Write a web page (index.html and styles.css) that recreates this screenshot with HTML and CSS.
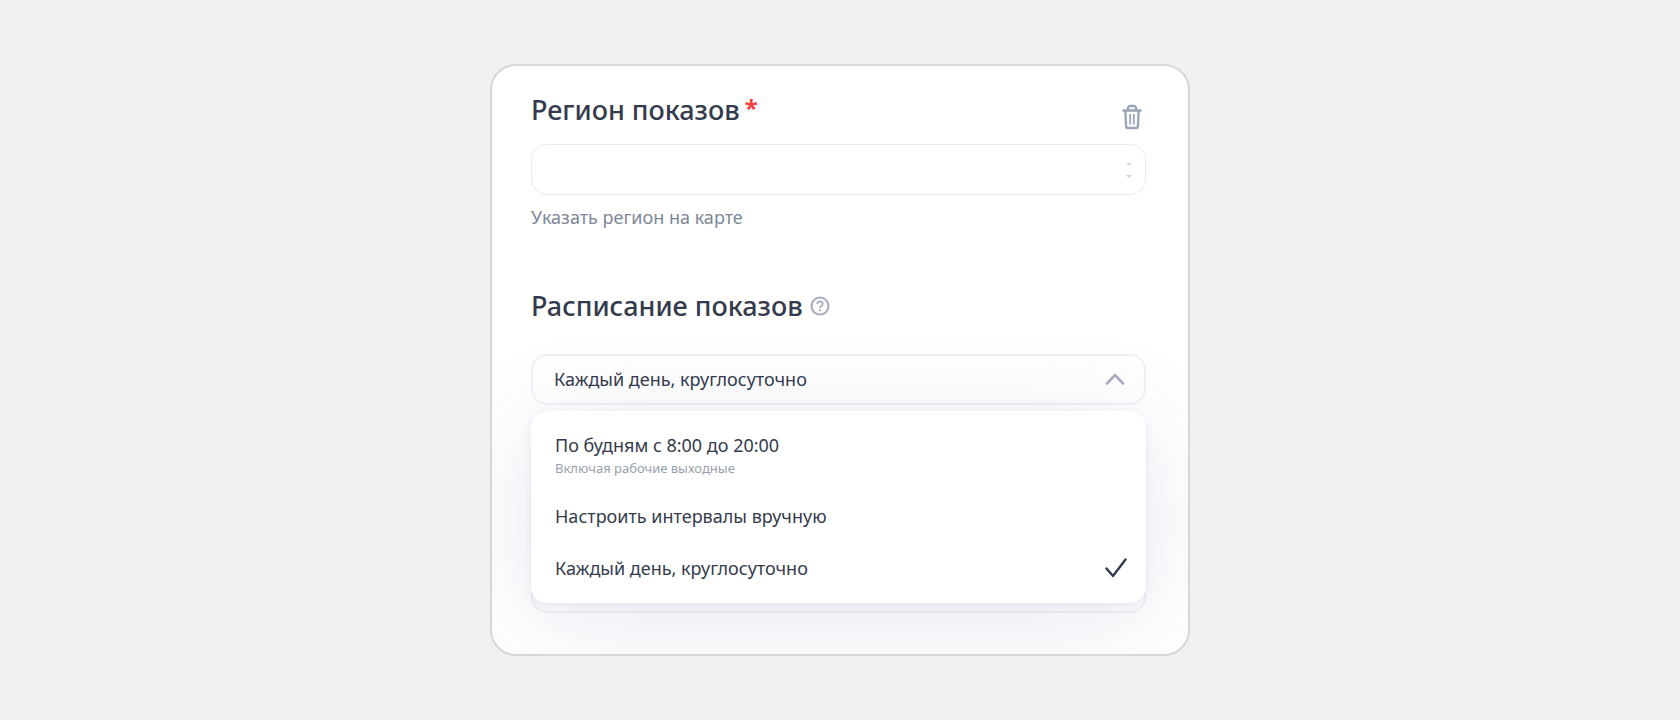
FILE: index.html
```
<!DOCTYPE html>
<html lang="ru">
<head>
    <meta charset="UTF-8">
    <title>Регион и расписание показов</title>
    <meta name="viewport" content="width=device-width, initial-scale=1.0">
    <link rel="stylesheet" href="styles.css">
</head>

<body>

<form class="card">
    <section class="group">
        <div class="group-head">
            <label class="title" for="region">Регион показов<span class="required">*</span></label>
            <button class="icon-button" type="button" aria-label="Удалить">
                <svg class="trash" viewBox="0 0 20 26" fill="none" stroke="currentColor" stroke-width="2.400">
                    <path d="M1.500 6.500h17" stroke-linecap="round"/>
                    <path d="M6 6V4.500Q6 2 8.500 2h3Q14 2 14 4.500V6"/>
                    <path d="M3.400 7l.7 15.500Q4.200 24 5.500 24h9q1.300 0 1.400-1.500L16.600 7"/>
                    <path d="M8.200 10v10.500M11.800 10v10.500" stroke-width="1.800"/>
                </svg>
            </button>
        </div>
        <div class="field">
            <input class="control" type="text" id="region">
            <svg class="spin" viewBox="0 0 6 16" fill="currentColor">
                <path d="M0 3L3 0l3 3zM0 13l3 3 3-3z"/>
            </svg>
        </div>
        <a class="map-link" href="#map">Указать регион на карте</a>
    </section>

    <section class="group">
        <div class="group-head">
            <label class="title" for="schedule">Расписание показов</label>
            <button class="help" type="button" aria-label="Справка">
                <svg viewBox="0 0 20 20" fill="none" stroke="currentColor" stroke-width="2.200">
                    <circle cx="10" cy="10" r="8.500"/>
                    <path d="M7.200 8.200Q7.200 5.400 10 5.400t2.800 2.400Q12.800 9.200 11.300 10T10 12" stroke-width="1.800"/>
                    <path d="M10 13.200v2" stroke-width="2"/>
                </svg>
            </button>
        </div>
        <div class="field schedule">
            <select class="control" id="schedule">
                <option>Каждый день, круглосуточно</option>
                <option>По будням с 8:00 до 20:00</option>
                <option>Настроить интервалы вручную</option>
            </select>
            <svg class="chevron" viewBox="0 0 20 12" fill="none" stroke="currentColor" stroke-width="2.600" stroke-linecap="round" stroke-linejoin="round">
                <path d="M2 10.500L10 2l8 8.500"/>
            </svg>
            <div class="menu">
                <button class="option" type="button">
                    <span>По будням с 8:00 до 20:00</span>
                    <small>Включая рабочие выходные</small>
                </button>
                <button class="option" type="button">Настроить интервалы вручную</button>
                <button class="option" type="button">
                    Каждый день, круглосуточно
                    <svg class="check" viewBox="0 0 22 20" fill="none" stroke="currentColor" stroke-width="2.400" stroke-linecap="round" stroke-linejoin="round">
                        <path d="M1.500 10.500L8 18 20.500 1.500"/>
                    </svg>
                </button>
            </div>
        </div>
    </section>

    <input class="control last" type="text" aria-label="Дополнительно">
</form>

</body>
</html>
```
FILE: styles.css
```
* {
    box-sizing: border-box;
}

body {
    margin: 0;
    min-height: 100vh;
    padding: 64px 20px;
    background: #f1f1f1;
    color: #343b4c;
    font-family: "Noto Sans", "Open Sans", sans-serif;
    font-size: 18px;
    line-height: 24px;
}

.card {
    max-width: 700px;
    margin: 0 auto;
    padding: 25px 42px 41px 39px;
    background: #fff;
    border: 2px solid #d6d7d9;
    border-radius: 26px;
    overflow: hidden;
}

.group {
    display: flex;
    flex-direction: column;
}

.group + .group {
    margin-top: 58px;
}

.group-head {
    display: flex;
    align-items: center;
    height: 40px;
}

.title {
    display: flex;
    font-size: 27px;
    font-weight: 500;
    line-height: 36px;
    padding-bottom: 2px;
}

.required {
    margin-left: 5px;
    color: #f8403c;
    font-size: 24px;
    font-weight: 700;
    line-height: 32px;
}

button {
    border: 0;
    padding: 0;
    background: none;
    color: inherit;
    font: inherit;
    cursor: pointer;
}

button svg {
    display: block;
}

.icon-button {
    margin-left: auto;
    margin-right: 4px;
    padding-top: 12px;
    color: #9ba5b7;
}

.trash {
    width: 20px;
    height: 26px;
}

.help {
    width: 20px;
    margin-left: 7px;
    padding-bottom: 2px;
    color: #a9afc0;
}

.field {
    position: relative;
    margin-top: 13px;
}

.control {
    display: block;
    width: 100%;
    height: 51px;
    padding: 0 23px;
    border: 1px solid #e9eaec;
    border-radius: 16px;
    background: #fff;
    color: inherit;
    font: inherit;
    appearance: none;
}

.spin {
    position: absolute;
    top: 18px;
    right: 14px;
    width: 6px;
    height: 16px;
    color: #d3d5d9;
}

.map-link {
    margin-top: 10px;
    color: #7d8798;
    text-decoration: none;
}

.schedule {
    margin-top: 27px;
}

.schedule .control,
.last {
    padding: 0 21px 2px;
    border: 2px solid #f1f2f6;
}

.chevron {
    position: absolute;
    top: 19px;
    right: 21px;
    width: 20px;
    height: 12px;
    color: #a9afc0;
}

.menu {
    position: absolute;
    top: 100%;
    left: 0;
    right: 0;
    margin-top: 6px;
    padding: 11px 0 9px;
    background: #fff;
    border-radius: 16px;
    box-shadow: 0 2px 8px rgba(60, 70, 130, 0.08), 0 14px 100px rgba(60, 80, 150, 0.13);
}

.option {
    display: flex;
    align-items: center;
    width: 100%;
    height: 52px;
    padding: 0 19px 0 24px;
    text-align: left;
}

.option:first-child {
    flex-direction: column;
    align-items: flex-start;
    justify-content: center;
    height: 68px;
}

.option small {
    color: #979fae;
    font-size: 13px;
    line-height: 22px;
}

.check {
    width: 22px;
    height: 20px;
    margin-left: auto;
}

.last {
    margin-top: 157px;
}
```
